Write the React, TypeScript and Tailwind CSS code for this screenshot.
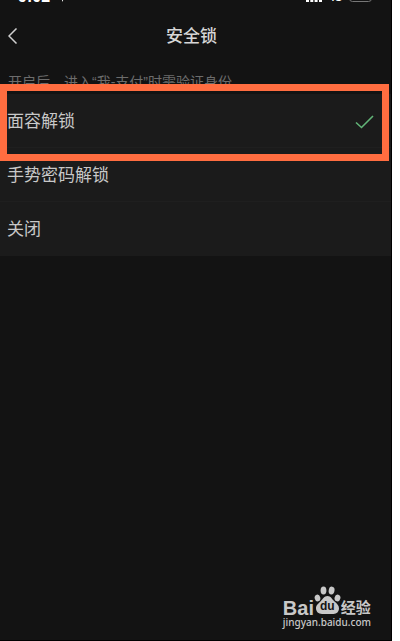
import { useState } from "react";

const options = ["面容解锁", "手势密码解锁", "关闭"];

function StatusBar() {
  return (
    <div className="flex h-1 items-end justify-between overflow-hidden pr-[18px] pl-[18px] text-white">
      <div className="flex items-end gap-2">
        <span className="h-[17px] text-base leading-5 font-semibold">9:02</span>
        <svg className="mb-0.5 h-2.5 w-2.5" viewBox="0 0 10 10" aria-hidden="true">
          <path d="M10 0 4 10 4 6 0 6Z" fill="currentColor" />
        </svg>
      </div>
      <div className="flex items-end gap-[7px]">
        <svg className="mb-0.5 h-2.5 w-4" viewBox="0 0 16 10" aria-hidden="true">
          <path d="M0 7h3v3H0zM4.300 5h3v5h-3zM8.600 2h3v8h-3zM13 0h3v10h-3z" fill="currentColor" />
        </svg>
        <span className="h-4 w-[13px] text-[10px] leading-[20px] font-semibold">4G</span>
        <svg className="mb-0.5 h-3 w-6" viewBox="0 0 24 12" fill="none" aria-hidden="true">
          <rect x="0.500" y="0.500" width="22" height="11" rx="3" stroke="#777777" />
          <rect x="2" y="2" width="5" height="8" rx="1" fill="#999999" />
        </svg>
      </div>
    </div>
  );
}

function Watermark() {
  return (
    <div className="flex flex-col text-[#c8c8c8]">
      <div className="flex h-7 items-end">
        <span className="w-[31px] font-['Liberation_Sans',sans-serif] text-xl leading-3 font-bold">Bai</span>
        <div className="relative h-7 w-[27px]">
          <svg className="h-7 w-[27px]" viewBox="0 0 27 28" fill="currentColor" aria-hidden="true">
            <ellipse cx="3.500" cy="12" rx="2.800" ry="3.400" transform="rotate(-15 3.500 12)" />
            <ellipse cx="9.500" cy="4.600" rx="2.900" ry="4" />
            <ellipse cx="17.600" cy="4.600" rx="2.900" ry="4" transform="rotate(10 17.600 4.600)" />
            <ellipse cx="23.500" cy="12" rx="2.900" ry="3.400" transform="rotate(15 23.500 12)" />
            <path d="M13.500 10c-3.400 0-4.500 3-6.800 5.200C4.300 17.600 2 19 2 22.300 2 25.700 4.500 28 8 28h11.500c3.200 0 5.500-2.300 5.500-5.700 0-2.900-2-4.500-4.500-6.800C17.900 13.100 16.800 10 13.500 10Z" />
          </svg>
          <span className="absolute inset-x-0 bottom-0.5 text-center font-['Liberation_Sans',sans-serif] text-xs leading-3 font-bold text-[#141414]">
            du
          </span>
        </div>
        <span className="text-[15px] leading-3 font-bold">经验</span>
      </div>
      <span className="font-['Noto_Sans',sans-serif] text-[10px] leading-4 font-medium">jingyan.baidu.com</span>
    </div>
  );
}

export default function App() {
  const [selected, setSelected] = useState(options[0]);

  return (
    <div className="min-h-screen bg-white pr-2 font-['Liberation_Sans','Noto_Sans_CJK_SC',sans-serif]">
      <main className="flex min-h-screen flex-col border-r border-b border-black bg-[#131313]">
        <StatusBar />
        <header className="grid h-16 grid-cols-[1fr_auto_1fr] items-center pr-4 pl-2">
          <button type="button" aria-label="返回" className="h-8 w-8 text-[#d0d0d0]">
            <svg className="h-4 w-2.5" viewBox="0 0 10 16" fill="none" aria-hidden="true">
              <path d="M8.500 0.500 1 8l7.500 7.500" stroke="currentColor" strokeWidth="1.500" />
            </svg>
          </button>
          <h1 className="pt-0.5 text-[17px] leading-6 font-medium text-[#d6d6d6]">安全锁</h1>
        </header>
        <p className="h-[26px] px-2 pt-1 text-sm leading-5 text-[#6c6c6c]">
          开启后，进入“我-支付”时需验证身份
        </p>

        <div role="radiogroup" aria-label="安全锁" className="relative bg-[#1b1b1b]">
          {options.map((name) => (
            <label
              key={name}
              className="relative flex h-[54px] items-center justify-between border-b border-[#1f1f1f] pt-0.5 pr-[17px] pl-[7px] text-[17px] leading-6 text-[#c8c8c8] last-of-type:border-transparent"
            >
              {name}
              <input
                type="radio"
                name="lock"
                className="peer sr-only"
                checked={selected === name}
                onChange={() => setSelected(name)}
              />
              <svg className="hidden h-[14px] w-[19px] text-[#62b578] peer-checked:block" viewBox="0 0 19 14" fill="none" aria-hidden="true">
                <path d="M1 7.500 6.500 12.500 18 1" stroke="currentColor" strokeWidth="1.600" />
              </svg>
            </label>
          ))}
          <div className="pointer-events-none absolute -top-2.5 right-0.5 left-0 h-[77px] border-[7px] border-[#ff6d40]" />
        </div>

        <footer className="mt-auto flex justify-end pr-5 pb-2.5">
          <Watermark />
        </footer>
      </main>
    </div>
  );
}
